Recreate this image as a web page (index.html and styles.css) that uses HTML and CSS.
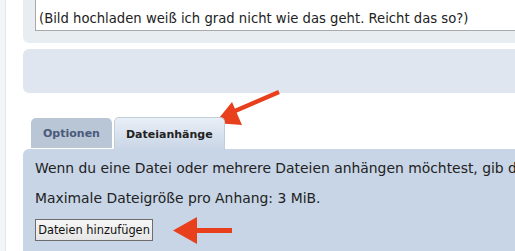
FILE: index.html
```html
<!DOCTYPE html>
<html lang="de">
<head>
<meta charset="utf-8">
<title>Beitrag</title>
<link rel="stylesheet" href="styles.css">
</head>
<body>
<div class="page">
  <aside class="rail"></aside>
  <main class="content">
    <section class="editor-panel">
      <div class="textbox">(Bild hochladen weiß ich grad nicht wie das geht. Reicht das so?)</div>
    </section>
    <section class="toolbar-panel"></section>
    <nav class="tabs">
      <span class="tab">Optionen</span>
      <span class="tab tab-active">Dateianhänge</span>
    </nav>
    <section class="attach-panel">
      <p class="attach-text">Wenn du eine Datei oder mehrere Dateien anhängen möchtest, gib die Details unten ein.</p>
      <p class="attach-text">Maximale Dateigröße pro Anhang: 3 MiB.</p>
      <button class="add-btn" type="button">Dateien hinzufügen</button>
    </section>
  </main>
  <svg class="arrows" width="515" height="251" viewBox="0 0 515 251">
    <line x1="279" y1="92" x2="228" y2="114" stroke="#e8401c" stroke-width="4.5"/>
    <polygon points="215,123 232,102 242,125" fill="#e8401c"/>
    <rect x="195" y="228" width="37" height="5" fill="#e8401c"/>
    <polygon points="173,230.5 197,217 197,244" fill="#e8401c"/>
  </svg>
</div>
</body>
</html>
```
FILE: styles.css
```css
html, body {
  margin: 0;
  padding: 0;
  background: #ffffff;
}
.page {
  position: relative;
  display: flex;
  width: 515px;
  height: 251px;
  overflow: hidden;
  font-family: "DejaVu Sans", Verdana, sans-serif;
  color: #222;
}
.rail {
  width: 5px;
  flex: none;
  background: #f3f5f8;
  border-right: 1px solid #e4e8ee;
}
.content {
  flex: 1;
  min-width: 0;
  padding-left: 17px;
  display: flex;
  flex-direction: column;
}
.editor-panel {
  background: #e8edf1;
  border-radius: 0 0 0 6px;
  padding: 0 0 12px 12px;
  margin-right: -20px;
}
.textbox {
  height: 31px;
  box-sizing: border-box;
  background: #fff;
  border: 1px solid #a9a9a9;
  border-top: none;
  padding: 11px 0 0 3px;
  font-size: 13.2px;
  line-height: 16px;
  color: #222;
  white-space: nowrap;
}
.toolbar-panel {
  margin-top: 6px;
  height: 44px;
  background: #dfe6ef;
  border-radius: 6px 0 0 6px;
  margin-right: -20px;
}
.tabs {
  display: flex;
  align-items: flex-end;
  gap: 2px;
  margin-top: 24px;
  padding-left: 8px;
  height: 33px;
  position: relative;
  z-index: 1;
  margin-bottom: -1px;
}
.tab {
  box-sizing: border-box;
  height: 30px;
  margin-bottom: 2px;
  padding: 0 12px;
  display: flex;
  align-items: center;
  font-size: 11px;
  font-weight: bold;
  color: #4b5a7a;
  background: #b9c6d6;
  border-radius: 5px 5px 0 0;
}
.tab-active {
  height: 33px;
  margin-bottom: 0;
  padding: 1px 11px 0 11px;
  color: #222;
  background: linear-gradient(#e9eff7, #c8d5e6);
  border: 1px solid #c2cedc;
  border-bottom: none;
}
.attach-panel {
  flex: 1;
  background: #c7d5e6;
  border-radius: 6px 0 0 0;
  padding: 10px 0 0 12px;
  margin-right: -20px;
}
.attach-text {
  margin: 0 0 12px 0;
  font-size: 13.9px;
  line-height: 18px;
  color: #222;
  white-space: nowrap;
}
.add-btn {
  display: block;
  margin-top: 4px;
  height: 22px;
  width: 118px;
  padding: 0;
  font-family: "DejaVu Sans", Verdana, sans-serif;
  font-size: 11.4px;
  color: #111;
  background: linear-gradient(#f6f6f6, #e6e6e6);
  border: 1px solid #6d6d6d;
  border-radius: 0;
}
.arrows {
  position: absolute;
  left: 0;
  top: 0;
  pointer-events: none;
}
```
